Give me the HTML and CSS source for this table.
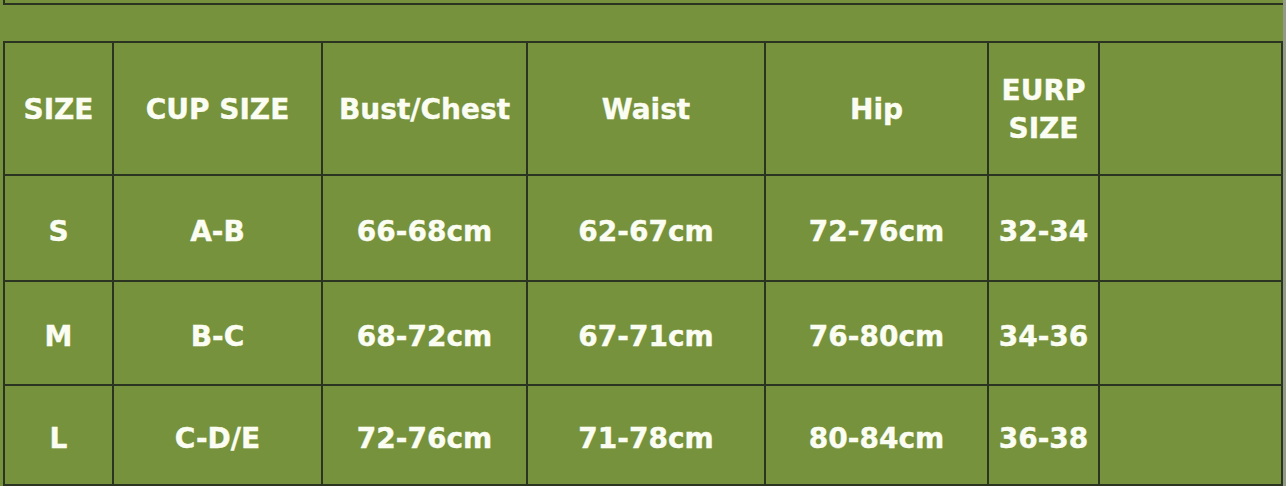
FILE: index.html
```html
<!DOCTYPE html>
<html>
<head>
<meta charset="utf-8">
<link rel="stylesheet" href="styles.css">
</head>
<body>
<div class="sheet">
  <div class="top-box"></div>
  <div class="band"></div>
  <table class="size-table">
    <colgroup>
      <col class="c1"><col class="c2"><col class="c3"><col class="c4"><col class="c5"><col class="c6"><col class="c7">
    </colgroup>
    <tr class="head">
      <td>SIZE</td><td>CUP SIZE</td><td>Bust/Chest</td><td>Waist</td><td>Hip</td><td class="eurp">EURP<br>SIZE</td><td></td>
    </tr>
    <tr class="r1">
      <td>S</td><td>A-B</td><td>66-68cm</td><td>62-67cm</td><td>72-76cm</td><td>32-34</td><td></td>
    </tr>
    <tr class="r2">
      <td>M</td><td>B-C</td><td>68-72cm</td><td>67-71cm</td><td>76-80cm</td><td>34-36</td><td></td>
    </tr>
    <tr class="r3">
      <td>L</td><td>C-D/E</td><td>72-76cm</td><td>71-78cm</td><td>80-84cm</td><td>36-38</td><td></td>
    </tr>
  </table>
</div>
</body>
</html>
```
FILE: styles.css
```css
html, body {
  margin: 0;
  padding: 0;
}
body {
  background: #8f9b84;
  width: 1286px;
  height: 486px;
  overflow: hidden;
}
.sheet {
  width: 1283px;
  background: #76923c;
  display: flex;
  flex-direction: column;
}
.top-box {
  flex-shrink: 0;
  height: 3px;
  margin-left: 3px;
  border-left: 2px solid #2a3420;
  border-bottom: 2px solid #2a3420;
}
.band {
  flex-shrink: 0;
  height: 36px;
}
.size-table {
  flex-shrink: 0;
  margin-left: 3px;
  width: 1280px;
  table-layout: fixed;
  border-collapse: separate;
  border-spacing: 0;
  border-left: 2px solid #2a3420;
  border-top: 2px solid #2a3420;
  font-family: "DejaVu Sans", Verdana, sans-serif;
  font-weight: bold;
  font-size: 28px;
  color: #fbfdf2;
  -webkit-text-stroke: 0.4px #fbfdf2;
}
.c1 { width: 109px; }
.c2 { width: 209px; }
.c3 { width: 205px; }
.c4 { width: 238px; }
.c5 { width: 223px; }
.c6 { width: 111px; }
.c7 { width: 183px; }
.size-table td {
  box-sizing: border-box;
  padding: 0;
  border-right: 2px solid #2a3420;
  border-bottom: 2px solid #2a3420;
  text-align: center;
  vertical-align: middle;
  white-space: nowrap;
}
.head td { height: 133px; padding-top: 2px; }
.r1 td { height: 106px; padding-top: 6px; }
.r2 td { height: 104px; padding-top: 6px; }
.r3 td { height: 100px; padding-top: 6px; }
.eurp { line-height: 38px; }
```
